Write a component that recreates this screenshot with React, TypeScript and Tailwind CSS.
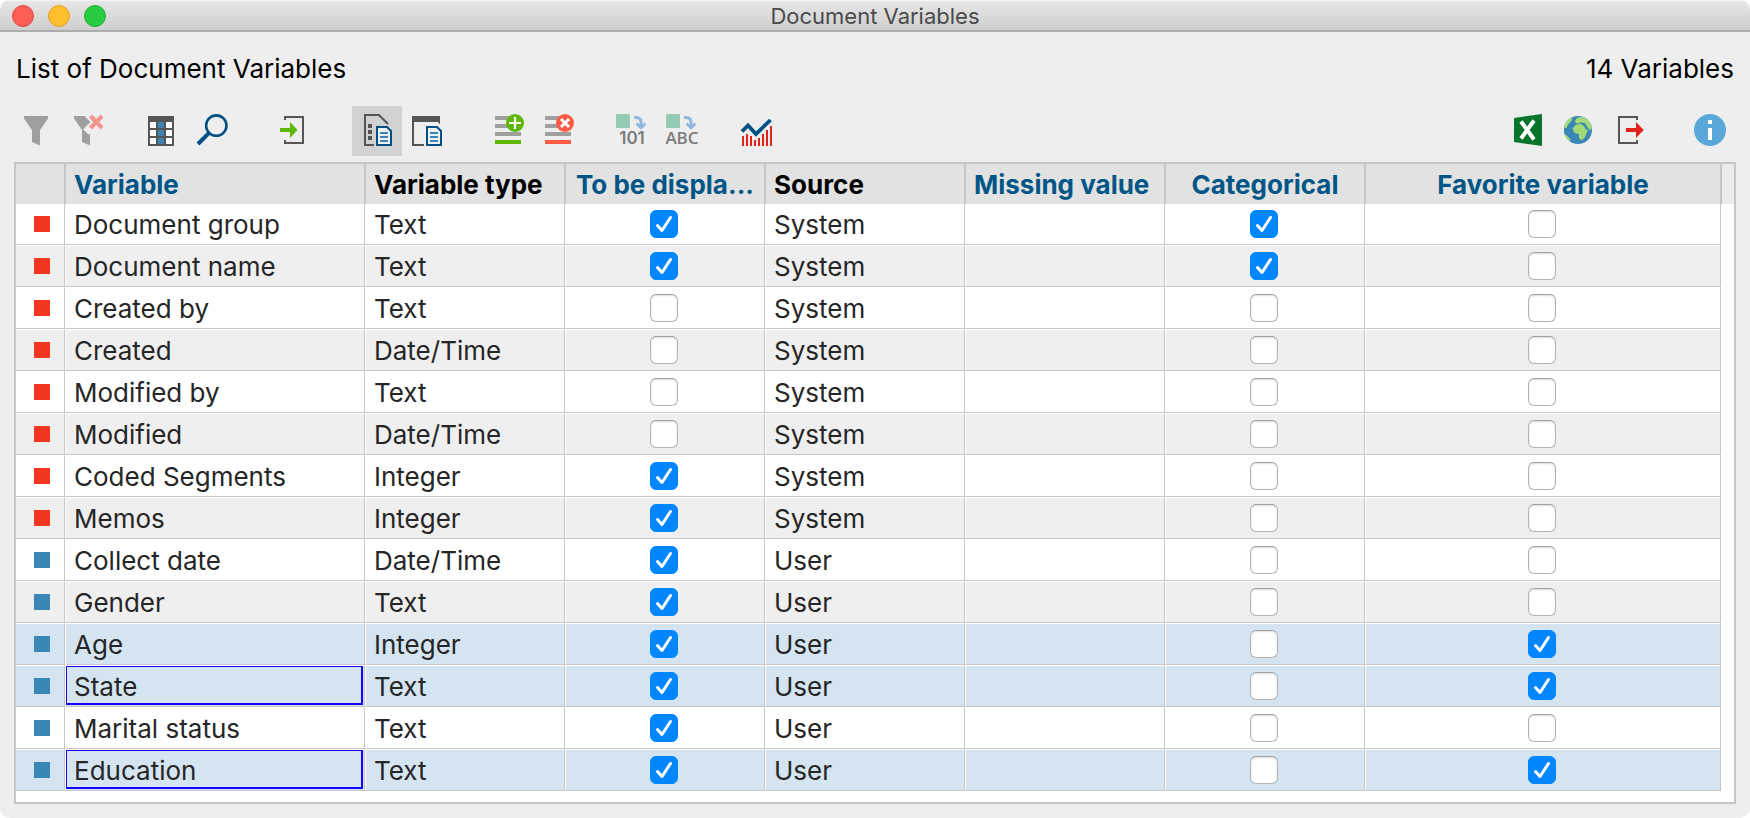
import type { ReactNode } from "react";
import clsx from "clsx";

interface Variable {
  name: string;
  type: "Text" | "Date/Time" | "Integer";
  source: "System" | "User";
  displayed?: boolean;
  categorical?: boolean;
  favorite?: boolean;
  selected?: boolean;
  focused?: boolean;
}

const variables: Variable[] = [
  { name: "Document group", type: "Text", source: "System", displayed: true, categorical: true },
  { name: "Document name", type: "Text", source: "System", displayed: true, categorical: true },
  { name: "Created by", type: "Text", source: "System" },
  { name: "Created", type: "Date/Time", source: "System" },
  { name: "Modified by", type: "Text", source: "System" },
  { name: "Modified", type: "Date/Time", source: "System" },
  { name: "Coded Segments", type: "Integer", source: "System", displayed: true },
  { name: "Memos", type: "Integer", source: "System", displayed: true },
  { name: "Collect date", type: "Date/Time", source: "User", displayed: true },
  { name: "Gender", type: "Text", source: "User", displayed: true },
  { name: "Age", type: "Integer", source: "User", displayed: true, favorite: true, selected: true },
  { name: "State", type: "Text", source: "User", displayed: true, favorite: true, selected: true, focused: true },
  { name: "Marital status", type: "Text", source: "User", displayed: true },
  { name: "Education", type: "Text", source: "User", displayed: true, favorite: true, selected: true, focused: true },
];

const columns = [
  { label: "Variable", editable: true, center: false },
  { label: "Variable type", editable: false, center: false },
  { label: "To be displa...", editable: true, center: true },
  { label: "Source", editable: false, center: false },
  { label: "Missing value", editable: true, center: false },
  { label: "Categorical", editable: true, center: true },
  { label: "Favorite variable", editable: true, center: true },
];

interface ToolButtonProps {
  label: string;
  active?: boolean;
  children: ReactNode;
}

function ToolButton({ label, active = false, children }: ToolButtonProps) {
  return (
    <button
      type="button"
      aria-label={label}
      aria-pressed={active || undefined}
      className={clsx("size-[50px] shrink-0", active && "bg-[#d1d3d2]")}
    >
      <svg viewBox="0 0 50 50" className="size-full" fill="none" aria-hidden="true">
        {children}
      </svg>
    </button>
  );
}

/* Small blue sheet shared by the two overview icons */
function Sheet() {
  return (
    <>
      <path d="M25 21H35L39 25V39H25Z" fill="#f0f0f0" stroke="#005085" strokeWidth="2" />
      <path d="M28 27H36M28 31H36M28 35H36" stroke="#3a87b7" strokeWidth="2" />
    </>
  );
}

/* Coloured square with an arrow that bends down to the target type */
function Convert({ children }: { children: ReactNode }) {
  return (
    <>
      <rect x="7" y="8" width="14" height="14" rx="1" fill="#94cbb5" />
      <path d="M25 11.5H27C30.5 11.5 32 13.5 32 16V21" stroke="#8fb6dc" strokeWidth="3" />
      <path d="M27.5 17.5L32 22L36.5 17.5" stroke="#8fb6dc" strokeWidth="2.6" />
      {children}
    </>
  );
}

function Toolbar() {
  return (
    <div className="flex items-center justify-between pl-3 pr-3.5">
      <div className="flex" role="toolbar" aria-label="Variable tools">
        <ToolButton label="Filter">
          <path d="M12 10H36V12.5L28 24V39.5L20 36V24L12 12.5Z" fill="#9f9f9f" />
        </ToolButton>
        <ToolButton label="Reset filter">
          <path d="M12 10H36V12.5L28 24V39.5L20 36V24L12 12.5Z" fill="#9f9f9f" />
          <path d="M26 8L44 26M44 6L24 26" stroke="#eeeeee" strokeWidth="8" />
          <path d="M28.5 10L40 22M40 10L28.5 22" stroke="#f4928c" strokeWidth="4" />
        </ToolButton>
        <div className="ml-6 flex">
          <ToolButton label="Select columns">
            <path d="M12 10H38V40H12Z" fill="#555555" />
            <path d="M14 16h6v6h-6zM14 24h6v6h-6zM14 32h6v6h-6zM30 16h6v6h-6zM30 24h6v6h-6zM30 32h6v6h-6z" fill="#fff" />
            <path d="M22 16h6v6h-6zM22 24h6v6h-6zM22 32h6v6h-6z" fill="#3a87b7" />
          </ToolButton>
          <ToolButton label="Search">
            <circle cx="30.3" cy="19.6" r="10.2" stroke="#005085" strokeWidth="2.6" />
            <path d="M23.3 26.7L12 38" stroke="#005085" strokeWidth="4" />
          </ToolButton>
        </div>
        <div className="ml-[33px] flex">
          <ToolButton label="Import">
            <path d="M16 14V11H34V37H16V34" stroke="#555555" strokeWidth="2" />
            <path d="M11 22H21V16L28.5 24L21 32V26H11Z" fill="#5cb800" />
          </ToolButton>
        </div>
        <div className="ml-[33px] flex">
          <ToolButton label="List of variables" active>
            <path d="M22 39H13V9H27L36 18" stroke="#555555" strokeWidth="2" />
            <path d="M16 18h4v4h-4zM16 24h4v4h-4zM16 30h4v4h-4z" fill="#555555" />
            <Sheet />
          </ToolButton>
          <ToolButton label="Data editor">
            <path d="M10 10H38V18.5L36 16H12V38H22V40H10Z" fill="#555555" />
            <Sheet />
          </ToolButton>
        </div>
        <div className="ml-[33px] flex">
          <ToolButton label="New variable">
            <path d="M10 12H28M10 20H28M10 28H36" stroke="#9f9f9f" strokeWidth="4" />
            <path d="M10 36H36" stroke="#5cb800" strokeWidth="4" />
            <circle cx="30" cy="17" r="9" fill="#5cb800" />
            <path d="M24 17H36M30 11V23" stroke="#fff" strokeWidth="2.2" />
          </ToolButton>
          <ToolButton label="Delete variable">
            <path d="M10 12H28M10 20H28M10 28H36" stroke="#9f9f9f" strokeWidth="4" />
            <path d="M10 36H36" stroke="#ff5a45" strokeWidth="4" />
            <circle cx="30" cy="17" r="9" fill="#ff5a45" />
            <path d="M26 13L34 21M34 13L26 21" stroke="#fff" strokeWidth="3" />
          </ToolButton>
        </div>
        <div className="ml-6 flex">
          <ToolButton label="Convert to number">
            <Convert>
              <text x="23" y="38" textAnchor="middle" fill="#7b7b7b" className="text-[17px] font-semibold">
                101
              </text>
            </Convert>
          </ToolButton>
          <ToolButton label="Convert to text">
            <Convert>
              <text
                x="23"
                y="38"
                textAnchor="middle"
                fill="#7b7b7b"
                className="font-['Open_Sans',sans-serif] text-[17px] font-semibold"
              >
                ABC
              </text>
            </Convert>
          </ToolButton>
        </div>
        <div className="ml-6 flex">
          <ToolButton label="Statistics">
            <path
              d="M10 30V40M14 28V40M18 30V40M22 34V40M26 32V40M30 28V40M34 24V40M38 20V40"
              stroke="#e2231a"
              strokeWidth="2"
            />
            <path d="M9 25.5L15 19.5L23 28L37.5 14" stroke="#005085" strokeWidth="3.8" />
          </ToolButton>
        </div>
      </div>

      <div className="flex" role="toolbar" aria-label="Export tools">
        <ToolButton label="Open as Excel table">
          <path d="M10 12L38 8V40L10 36Z" fill="#07752b" />
          <path d="M17 15.5L30 33.5M30 14.5L17 32.5" stroke="#fff" strokeWidth="4" />
        </ToolButton>
        <ToolButton label="Open as website">
          <circle cx="24" cy="24" r="14" fill="#3a87b7" />
          <path
            d="M18.5 11.2L17.5 15L14.5 18L12.5 22L10.2 22C10.5 17 14 12.5 18.5 11.2ZM10.5 28L13.5 30L16 33V35.5C13.5 34 11 31.5 10.5 28ZM20.5 15.5L23.5 11.5L28.5 11C33 12.5 37.5 16.5 38 22L36 24.5L33 20.5L31 17L27 16.5L23 17.5ZM18.5 22.5L21.5 19L26 17.5L30 20L31.5 23L34 24L32 28.5L30.5 32L27 34.5L25 31.5V28L20.5 27Z"
            fill="#a3d977"
          />
        </ToolButton>
        <ToolButton label="Export">
          <path d="M33 14V11H15V37H33V34" stroke="#555555" strokeWidth="2" />
          <path d="M22 22H32V16L39.7 24L32 32V26H22Z" fill="#e2231a" />
        </ToolButton>
        <div className="ml-8 flex">
          <ToolButton label="Help">
            <circle cx="24" cy="24" r="16" fill="#5aa8d9" />
            <path d="M22 14h4v4h-4zM22 22h4v12h-4z" fill="#fff" />
          </ToolButton>
        </div>
      </div>
    </div>
  );
}

interface CheckCellProps {
  label: string;
  checked?: boolean;
  className: string;
}

function CheckCell({ label, checked = false, className }: CheckCellProps) {
  return (
    <td className={className}>
      <div className="flex h-10 items-center justify-center pr-0.5">
        <label className="grid size-7">
          <input
            type="checkbox"
            aria-label={label}
            defaultChecked={checked}
            className="peer col-start-1 row-start-1 size-7 appearance-none rounded-md border border-[#b4b4b4] border-t-[#a0a0a0] bg-white shadow-[inset_0_1px_2px_#00000026] checked:border-[#0087ff] checked:bg-[#0087ff] checked:shadow-none"
          />
          <svg
            viewBox="0 0 28 28"
            className="pointer-events-none invisible col-start-1 row-start-1 size-7 peer-checked:visible"
            fill="none"
            aria-hidden="true"
          >
            <path d="M7.5 15.5L12 20.5L20.5 7.5" stroke="#fff" strokeWidth="3" strokeLinecap="round" strokeLinejoin="round" />
          </svg>
        </label>
      </div>
    </td>
  );
}

function VariableRow({ variable, first }: { variable: Variable; first: boolean }) {
  const { name, type, source, displayed, categorical, favorite, selected, focused } = variable;
  const cell = clsx(
    "border-b border-l border-r border-b-[#c6c6c6] border-l-white border-r-[#c6c6c6] p-0",
    !first && "border-t border-t-white",
  );
  const text = "flex h-10 items-center px-2 pt-0.5 whitespace-nowrap";
  const focusedText =
    "mr-px mb-px flex h-[39px] items-center border-t border-r-2 border-b-2 border-l border-[#1400ff] px-[7px] pt-1 whitespace-nowrap";

  return (
    <tr className={selected ? "bg-[#d5e4f1]" : "bg-white even:bg-[#efefef]"}>
      <td className={clsx(cell, "border-l-0")}>
        <div className="flex h-10 items-center pl-[18px]">
          <span className={clsx("size-4", source === "System" ? "bg-[#f23620]" : "bg-[#3a87b5]")} />
        </div>
      </td>
      <td className={cell}>
        <div className={focused ? focusedText : text}>{name}</div>
      </td>
      <td className={cell}>
        <div className={text}>{type}</div>
      </td>
      <CheckCell className={cell} label={`Display ${name}`} checked={displayed} />
      <td className={cell}>
        <div className={text}>{source}</div>
      </td>
      <td className={cell} />
      <CheckCell className={cell} label={`${name} is categorical`} checked={categorical} />
      <CheckCell className={cell} label={`${name} is a favorite`} checked={favorite} />
      <td className="bg-white p-0" />
    </tr>
  );
}

export default function App() {
  return (
    <main className="overflow-hidden rounded-[10px] bg-[#eeeeee] font-['Inter',sans-serif] text-black">
      <header className="grid h-8 grid-cols-[1fr_auto_1fr] items-center border-t border-b-2 border-t-[#f4f4f4] border-b-[#adadad] bg-linear-to-b from-[#e6e6e6] to-[#cfcfcf] px-3">
        <div className="flex gap-3.5">
          <button type="button" aria-label="Close" className="size-[22px] rounded-full border border-[#e2463f] bg-[#ff5f57]" />
          <button type="button" aria-label="Minimize" className="size-[22px] rounded-full border border-[#e0a028] bg-[#febf2e]" />
          <button type="button" aria-label="Zoom" className="size-[22px] rounded-full border border-[#1eac2f] bg-[#28cc40]" />
        </div>
        <h1 className="text-[22px] leading-7 text-[#4a4a4a]">Document Variables</h1>
      </header>

      <div className="flex h-[74px] items-center justify-between px-4 pb-0.5 text-[26px]">
        <h2>List of Document Variables</h2>
        <p>14 Variables</p>
      </div>

      <Toolbar />

      <div className="mx-3.5 mt-1.5 mb-3.5 border-2 border-[#c6c6c6] bg-white pb-[11px]">
        <table className="w-full table-fixed border-separate border-spacing-0 text-[26px] leading-8 text-[#262626]">
          <colgroup>
            <col className="w-[49px]" />
            <col className="w-[300px]" />
            <col className="w-[200px]" />
            <col className="w-[200px]" />
            <col className="w-[200px]" />
            <col className="w-[200px]" />
            <col className="w-[200px]" />
            <col />
            <col className="w-[13px]" />
          </colgroup>
          <thead>
            <tr className="h-10 bg-[#e2e2e2]">
              <th className="border-r border-[#c6c6c6] p-0" aria-label="Kind" />
              {columns.map((column) => (
                <th
                  key={column.label}
                  scope="col"
                  className={clsx(
                    "border-x border-[#c6c6c6] px-2 pt-0.5 pb-0 font-bold whitespace-nowrap",
                    column.center ? "text-center" : "text-left",
                    column.editable ? "text-[#005587]" : "text-black",
                  )}
                >
                  {column.label}
                </th>
              ))}
              <th className="border-l border-[#c6c6c6] bg-[#ebebeb] p-0" aria-hidden="true" />
            </tr>
          </thead>
          <tbody>
            {variables.map((variable, index) => (
              <VariableRow key={variable.name} variable={variable} first={index === 0} />
            ))}
          </tbody>
        </table>
      </div>
    </main>
  );
}
